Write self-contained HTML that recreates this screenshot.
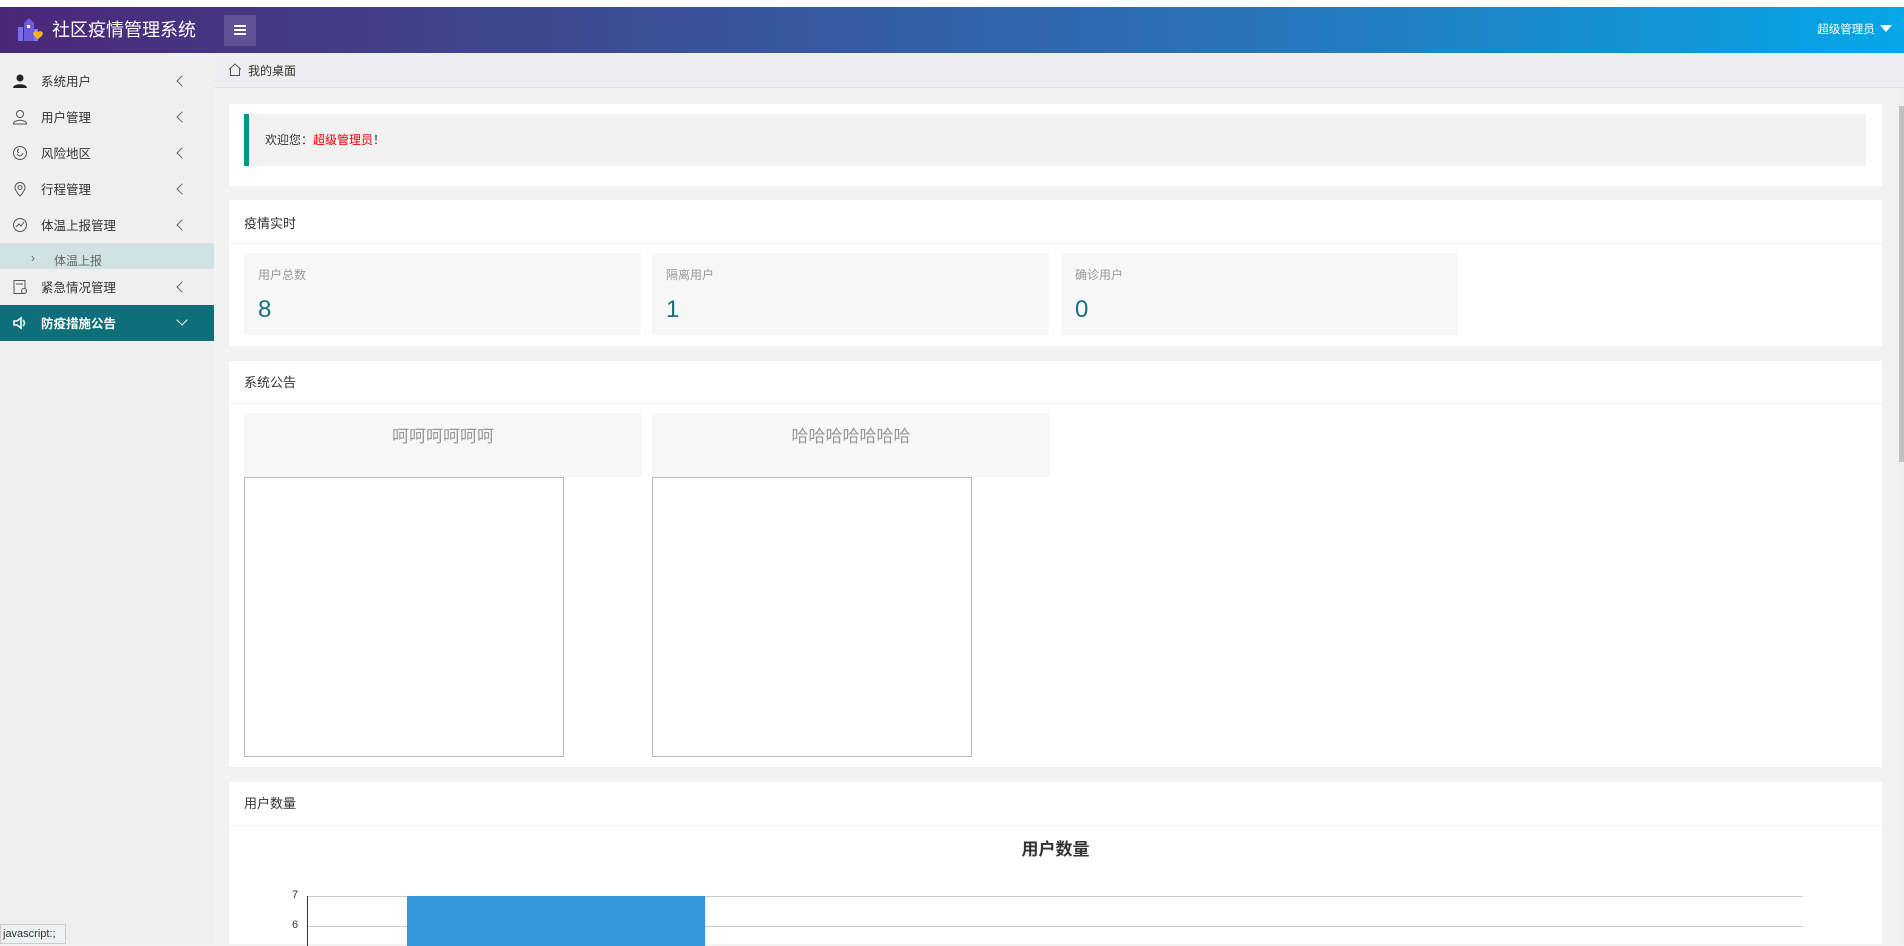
<!DOCTYPE html>
<html><head><meta charset="utf-8"><style>
*{margin:0;padding:0;box-sizing:border-box}
body{width:1904px;height:944px;overflow:hidden;background:#f2f2f2;font-family:"Liberation Sans","Noto Sans CJK SC",sans-serif;position:relative;color:#333}
.top{position:absolute;left:0;top:0;width:1904px;height:7px;background:#fff}
.hdr{position:absolute;left:0;top:7px;width:1904px;height:46px;background:linear-gradient(90deg,#4b2778 0%,#3d4a92 30%,#2a73b8 65%,#05a8e8 100%)}
.title{position:absolute;left:52px;top:9px;color:#fff;font-size:18px}
.tog{position:absolute;left:224px;top:8px;width:32px;height:31px;background:rgba(255,255,255,.14)}
.user{position:absolute;right:12px;top:14px;color:#fff;font-size:11.5px}
.side{position:absolute;left:0;top:53px;width:214px;height:891px;background:#efefef}
.it{position:absolute;left:0;width:214px;height:36px;font-size:12.5px;color:#333}
.it span{position:absolute;left:41px;top:8px}
.it .ar{position:absolute;left:178px;top:14px;width:8px;height:8px;border-left:1px solid #666;border-bottom:1px solid #666;transform:rotate(45deg)}
.it svg{position:absolute;left:12px;top:10px}
.card{position:absolute;left:229px;width:1653px;background:#fff}
.ch{position:absolute;left:15px;font-size:13px;color:#333}
.hr{position:absolute;left:0;width:1653px;height:1px;background:#f2f2f2}
.box{position:absolute;width:397px;background:#f7f7f7}
.box .l{position:absolute;left:14px;top:13px;font-size:12px;color:#999}
.box .n{position:absolute;left:14px;top:43px;font-size:24px;color:#1b6d7e}
.an{position:absolute;width:398px;height:64px;background:#f7f7f7;text-align:center;color:#999;font-size:17px;padding-top:9px}
.img{position:absolute;width:320px;height:280px;border:1px solid #bbb;background:#fff}
</style></head><body>
<div class="top"></div>
<div class="hdr">
<svg style="position:absolute;left:17px;top:10px" width="28" height="26" viewBox="0 0 28 26"><rect x="1" y="10" width="5" height="14" fill="#7c6df0"/><path d="M7 24V6l5-5 5 5v18z" fill="#6d5be0"/><rect x="10" y="8" width="3" height="3" fill="#fff"/><rect x="17" y="12" width="4" height="12" fill="#8a7af5"/><path d="M16 16c2-3 5-2 5 0 0-2 3-3 5 0 0 3-5 6-5 6s-5-3-5-6z" fill="#f6b51e"/></svg>
<div class="title">社区疫情管理系统</div>
<div class="tog"><div style="position:absolute;left:10px;top:10px;width:12px;height:1.5px;background:#fff;box-shadow:0 4px 0 #fff,0 8px 0 #fff"></div></div>
<div class="user">超级管理员 <span style="display:inline-block;border:6px solid transparent;border-top:7px solid #fff;vertical-align:-5px;margin-left:2px"></span></div>
</div>
<div class="side">
<div class="it" style="top:10px"><svg width="16" height="16" viewBox="0 0 16 16"><circle cx="8" cy="5" r="3.5" fill="#222"/><path d="M1 15c0-5 14-5 14 0z" fill="#222"/></svg><span>系统用户</span><i class="ar"></i></div>
<div class="it" style="top:46px"><svg width="16" height="16" viewBox="0 0 16 16" fill="none" stroke="#555"><circle cx="8" cy="5" r="3.5"/><path d="M1.5 15c0-5 13-5 13 0z"/></svg><span>用户管理</span><i class="ar"></i></div>
<div class="it" style="top:82px"><svg width="16" height="16" viewBox="0 0 16 16" fill="none" stroke="#555"><circle cx="8" cy="8" r="6.5"/><path d="M5 9c2 3 5 2 6-1M7 4c-2 1-2 3 0 4"/></svg><span>风险地区</span><i class="ar"></i></div>
<div class="it" style="top:118px"><svg width="16" height="16" viewBox="0 0 16 16" fill="none" stroke="#555"><path d="M8 15s-5-5-5-8.5a5 5 0 0 1 10 0C13 10 8 15 8 15z"/><circle cx="8" cy="6.5" r="2"/></svg><span>行程管理</span><i class="ar"></i></div>
<div class="it" style="top:154px"><svg width="16" height="16" viewBox="0 0 16 16" fill="none" stroke="#555"><circle cx="8" cy="8" r="6.5"/><path d="M4 10l3-3 2 2 3-4"/></svg><span>体温上报管理</span><i class="ar"></i></div>
<div style="position:absolute;top:190px;left:0;width:214px;height:26px;background:#d0e2e2;font-size:12px;color:#666"><span style="position:absolute;left:31px;top:8px">›</span><span style="position:absolute;left:54px;top:9px">体温上报</span></div>
<div class="it" style="top:216px"><svg width="16" height="16" viewBox="0 0 16 16" fill="none" stroke="#555"><rect x="2" y="1.5" width="11" height="13"/><path d="M4 5h7"/><circle cx="12" cy="12" r="2.5" fill="#eee"/></svg><span>紧急情况管理</span><i class="ar"></i></div>
<div class="it" style="top:252px;background:#0e6f7a;color:#fff"><svg width="16" height="16" viewBox="0 0 16 16" fill="none" stroke="#fff" stroke-width="1.6"><path d="M2 6h3l4-3v10l-4-3H2z"/><path d="M11 5c2 2 2 4 0 6"/></svg><span style="font-weight:bold">防疫措施公告</span><i class="ar" style="border-color:#fff;transform:rotate(-45deg);left:178px;top:11px"></i></div>
</div>
<div style="position:absolute;left:214px;top:53px;width:1690px;height:35px;background:#eeeef0;border-bottom:1px solid #e2e2e2">
<svg style="position:absolute;left:14px;top:10px" width="14" height="13" viewBox="0 0 14 13" fill="none" stroke="#555"><path d="M1 6.5L7 1l6 5.5M2.5 5v7.5h9V5"/></svg>
<span style="position:absolute;left:34px;top:9px;font-size:12px;color:#333">我的桌面</span></div>
<div class="card" style="top:104px;height:82px">
<div style="position:absolute;left:15px;top:10px;width:1622px;height:52px;background:#f2f2f2;border-left:5px solid #009688"><span style="position:absolute;left:16px;top:17px;font-size:12px">欢迎您：<span style="color:#e00">超级管理员</span>！</span></div></div>
<div class="card" style="top:200px;height:146px">
<div class="ch" style="top:13px">疫情实时</div><div class="hr" style="top:43px"></div>
<div class="box" style="left:15px;top:53px;height:82px"><div class="l">用户总数</div><div class="n">8</div></div>
<div class="box" style="left:423px;top:53px;height:82px"><div class="l">隔离用户</div><div class="n">1</div></div>
<div class="box" style="left:832px;top:53px;height:82px"><div class="l">确诊用户</div><div class="n">0</div></div>
</div>
<div class="card" style="top:361px;height:406px">
<div class="ch" style="top:11px">系统公告</div><div class="hr" style="top:42px"></div>
<div class="an" style="left:15px;top:52px">呵呵呵呵呵呵</div>
<div class="an" style="left:423px;top:52px">哈哈哈哈哈哈哈</div>
<div class="img" style="left:15px;top:116px"></div>
<div class="img" style="left:423px;top:116px"></div>
</div>
<div class="card" style="top:782px;height:162px">
<div class="ch" style="top:11px">用户数量</div><div class="hr" style="top:43px"></div>
<div style="position:absolute;left:0;width:1653px;top:53px;text-align:center;font-size:17px;font-weight:bold;color:#333">用户数量</div>
<div style="position:absolute;left:79px;top:114px;width:1495px;height:1px;background:#ccc"></div>
<div style="position:absolute;left:79px;top:144px;width:1495px;height:1px;background:#ccc"></div>
<div style="position:absolute;left:78px;top:114px;width:1px;height:50px;background:#333"></div>
<span style="position:absolute;left:63px;top:107px;font-size:11px;color:#333">7</span>
<span style="position:absolute;left:63px;top:137px;font-size:11px;color:#333">6</span>
<div style="position:absolute;left:178px;top:114px;width:298px;height:50px;background:#3398db"></div>
</div>
<div style="position:absolute;left:1898px;top:88px;width:6px;height:856px;background:#f0f0f0"></div>
<div style="position:absolute;left:1899px;top:106px;width:5px;height:356px;background:#c1c1c1"></div>
<div style="position:absolute;left:0;top:924px;width:66px;height:20px;background:#eef0f2;border:1px solid #ccc;font-size:11px;color:#333;padding:3px 2px">javascript:;</div>
</body></html>
